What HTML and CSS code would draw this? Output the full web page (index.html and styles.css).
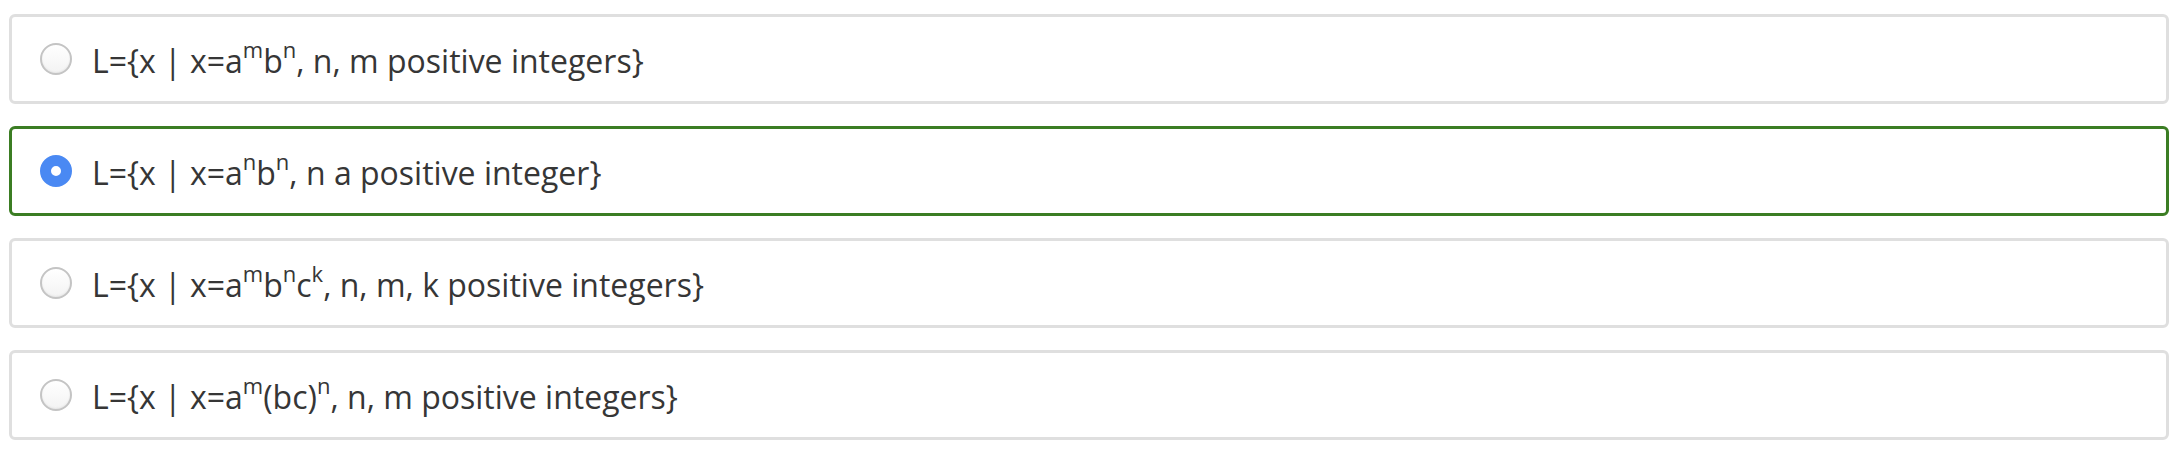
FILE: index.html
```html
<!DOCTYPE html>
<html>
<head>
<meta charset="utf-8">
<link rel="stylesheet" href="styles.css">
</head>
<body>
<div class="options">
  <label class="option">
    <span class="radio"></span>
    <span class="text">L={x | x=a<sup>m</sup>b<sup>n</sup>, n, m positive integers}</span>
  </label>
  <label class="option selected">
    <span class="radio checked"></span>
    <span class="text">L={x | x=a<sup>n</sup>b<sup>n</sup>, n a positive integer}</span>
  </label>
  <label class="option">
    <span class="radio"></span>
    <span class="text">L={x | x=a<sup>m</sup>b<sup>n</sup>c<sup>k</sup>, n, m, k positive integers}</span>
  </label>
  <label class="option">
    <span class="radio"></span>
    <span class="text">L={x | x=a<sup>m</sup>(bc)<sup>n</sup>, n, m positive integers}</span>
  </label>
</div>
</body>
</html>
```
FILE: styles.css
```css
html, body {
  margin: 0;
  background: #ffffff;
}
body {
  font-family: "Open Sans", "Noto Sans", sans-serif;
  color: #363636;
}
.options {
  display: flex;
  flex-direction: column;
  gap: 22px;
  padding: 14px 15px 0 9px;
}
.option {
  box-sizing: border-box;
  height: 90px;
  display: flex;
  align-items: center;
  gap: 20px;
  padding-left: 28px;
  border: 3px solid #dfdfdf;
  border-radius: 6px;
  background: #fff;
}
.option.selected {
  border-color: #3b7d23;
}
.radio {
  box-sizing: border-box;
  width: 32px;
  height: 32px;
  border-radius: 50%;
  border: 2px solid #c4c4c4;
  background: linear-gradient(#ffffff, #f3f3f3);
  box-shadow: inset 0 -1px 2px rgba(0,0,0,0.06);
  flex: none;
}
.radio.checked {
  border: 11px solid #4a89f3;
  background: #ffffff;
  box-shadow: none;
}
.text {
  font-size: 32px;
  line-height: 1;
  white-space: nowrap;
  padding-top: 3px;
}
sup {
  font-size: 22px;
  line-height: 0;
  position: relative;
  top: -3px;
}
```
